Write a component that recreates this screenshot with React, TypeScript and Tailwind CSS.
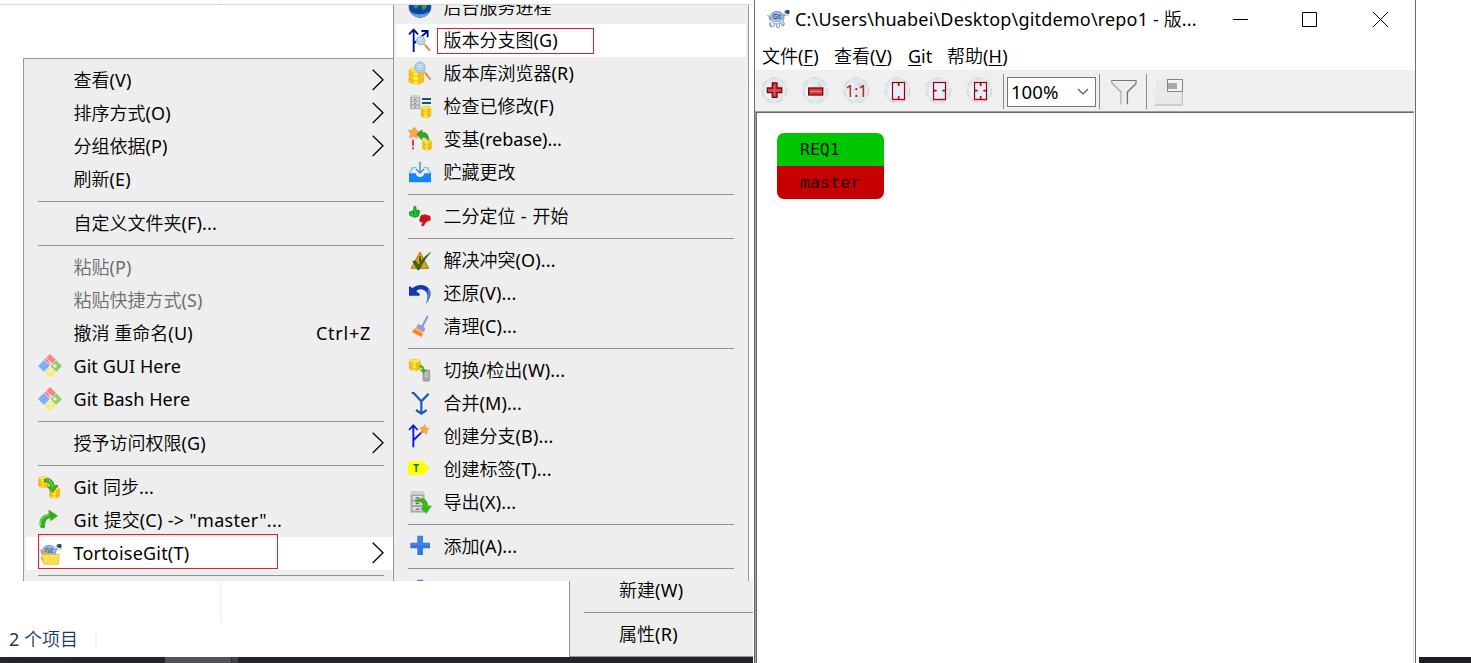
import React, { ReactNode } from "react";

const Svg = ({ children }: { children: ReactNode }) => (
  <svg viewBox="0 0 72 72" className="block h-6 w-6" fill="none">{children}</svg>
);

// Latin runs are set at regular weight, Chinese runs at the lighter one of the page.
const Mixed = ({ text }: { text: string }) => (
  <>
    {text.split(/([\x20-\x7e]+)/).map((s, i) => (i % 2 ? <span key={i} className="font-normal">{s}</span> : <span key={i} className="tracking-normal">{s}</span>))}
  </>
);

const Db = ({ x, y, w, h }: { x: number; y: number; w: number; h: number }) => {
  const r = w * 0.16;
  return (
    <g transform={`translate(${x} ${y})`}>
      <path d={`M0 ${r}V${h - r}Q${w / 2} ${h + r} ${w} ${h - r}V${r}Z`} fill="#f8c80c" stroke="#e0a008" strokeWidth="1.5" />
      <path d={`M${w * 0.3} ${r}V${h}H${w * 0.6}V${r}Z`} fill="#ffec5a" />
      <ellipse cx={w / 2} cy={r} rx={w / 2} ry={r} fill="#ffe94a" stroke="#e8b010" strokeWidth="1.5" />
      <path d={`M0 ${h * 0.38}Q${w / 2} ${h * 0.38 + 2 * r} ${w} ${h * 0.38}M0 ${h * 0.66}Q${w / 2} ${h * 0.66 + 2 * r} ${w} ${h * 0.66}`} stroke="#e0a50c" strokeWidth="2" />
    </g>
  );
};

const Lens = ({ cx, cy, r, hx, hy }: { cx: number; cy: number; r: number; hx: number; hy: number }) => (
  <g>
    <path d={`M${cx + r * 0.8} ${cy + r * 0.8}L${hx} ${hy}`} stroke="#e8853a" strokeWidth="6" strokeLinecap="round" />
    <path d={`M${cx + r * 0.7} ${cy + r * 0.7}l5 5`} stroke="#c8c8c8" strokeWidth="6" />
    <circle cx={cx} cy={cy} r={r} fill="#a9cde4" stroke="#a9bccb" strokeWidth="3" />
    <path d={`M${cx - r * 0.6} ${cy - 2}h${r * 1.2}M${cx - r * 0.5} ${cy + 5}h${r}M${cx - r * 0.4} ${cy - 8}h${r * 0.8}`} stroke="#d6eaf6" strokeWidth="3" />
  </g>
);

const Cabinet = ({ x, y, w, h }: { x: number; y: number; w: number; h: number }) => (
  <g transform={`translate(${x} ${y}) scale(${w / 32} ${h / 42})`}>
    <path d="M3 0H29L32 6V42H0V6Z" fill="#b4bac0" />
    <path d="M3 0H29L31 6H1Z" fill="#ccd4da" />
    {[8, 19, 30].map((t) => (
      <g key={t}>
        <rect x="4" y={t} width="24" height="9" fill="#e1e1de" stroke="#8f959b" strokeWidth="1.5" />
        <path d={`M12 ${t + 5}H20`} stroke="#5b6268" strokeWidth="2.5" />
      </g>
    ))}
  </g>
);

const Star = ({ x, y, s }: { x: number; y: number; s: number }) => (
  <path transform={`translate(${x} ${y}) rotate(6) scale(${s})`} d="M0-17L6-6L17-5L9 4L11 16L0 10L-11 16L-9 4L-17-5L-6-6Z" fill="#ffa63e" stroke="#e58a3a" strokeWidth="1.5" />
);

const Turtle = () => (
  <g>
    <path d="M4 25q6 0 8 10M8 32l6 8M55 28l7-10M50 24q8 4 12-4M12 46q-4 12 4 14M52 44q6 10-2 14" stroke="#7b8794" strokeWidth="2.5" />
    <path d="M14 48q-2 12 6 12q8-2 6-10M32 52q-4 10 4 10q8-2 5-10M44 46q2 12 8 9q5-4-1-12" fill="#f3f3f3" stroke="#76808b" strokeWidth="2.5" />
    <ellipse cx="33" cy="32" rx="21" ry="19" fill="#9bbaea" stroke="#5f83b8" strokeWidth="2" />
    <path d="M16 42q16 12 34 0" stroke="#dfe8f4" strokeWidth="4" />
    <text x="33" y="37" textAnchor="middle" fontSize="19" fontWeight="500" fill="#39486d" fontFamily="Noto Sans">Git</text>
    <circle cx="62" cy="18" r="8" fill="#f4f6f8" stroke="#8c98a5" strokeWidth="2" />
    <rect x="58" y="9" width="12" height="11" rx="3" fill="#153c5c" />
    <path d="M60 12h4" stroke="#3ebbe0" strokeWidth="3" />
  </g>
);

const GitIcon = () => (
  <Svg>
    <path d="M36 0L54 18L36 36L18 18Z" fill="#ff8080" />
    <path d="M18 18L36 36L18 54L0 36Z" fill="#7aafff" />
    <path d="M54 18L72 36L54 54L36 36Z" fill="#8dd35f" />
    <path d="M36 36L54 54L36 72L18 54Z" fill="#ffe680" />
    <path d="M24 11L37 25V51M37 25L51 36" stroke="#eeeeee" strokeWidth="3" />
    <path d="M18 18L36 36L54 18M18 54L36 36L54 54" stroke="#eeeeee" strokeWidth="2" />
    <circle cx="36" cy="25" r="3.5" fill="#eeeeee" />
    <circle cx="51" cy="36" r="5" fill="#eeeeee" />
    <circle cx="37" cy="51" r="5" fill="#eeeeee" />
  </Svg>
);
const SyncIcon = () => (
  <Svg>
    <Db x={2} y={5} w={29} h={33} />
    <Db x={35} y={36} w={30} h={33} />
    <path d="M19 13Q42 3 49 32L60 31L45 52L28 36L38 35Q34 17 19 21Z" fill="#37b51c" stroke="#24800f" strokeWidth="2" />
    <path d="M27 14Q41 12 43 36" stroke="#8be66b" strokeWidth="2.5" />
  </Svg>
);
const CommitIcon = () => (
  <Svg>
    <path d="M32 5L60 23L38 40L36 31Q20 32 21 58Q13 64 6 56Q-2 24 32 17Z" fill="#34ad1d" />
    <path d="M8 54Q4 26 34 21" stroke="#7edb62" strokeWidth="3.5" />
  </Svg>
);
const TortoiseFolder = () => (
  <Svg>
    <Turtle />
    <path d="M14 34H30L34 39H62L60 69H16Z" fill="#e5b52d" />
    <path d="M12 44Q12 41 16 41H64L61 70H18Z" fill="#ffdf4d" stroke="#e2b52b" strokeWidth="2" />
    <path d="M16 45H61" stroke="#fff1a0" strokeWidth="2" />
  </Svg>
);
const Globe = () => (
  <Svg>
    <circle cx="36" cy="34" r="34" fill="#1659b8" />
    <path d="M6 24Q30 44 66 24Q70 64 36 68Q2 60 6 24Z" fill="#0f459c" />
    <path d="M12 22L34 22L32 32L24 42L18 36ZM42 22L60 22L54 38L46 46L42 38Z" fill="#3f9a4a" />
    <path d="M8 50Q34 66 64 50Q54 68 36 68Q18 68 8 50Z" fill="#5f9fe2" />
  </Svg>
);
const GraphIcon = () => (
  <Svg>
    <path d="M17 72V5M3 19L17 5L30 19M18 46L56 12M40 9H59V28" stroke="#000f80" strokeWidth="5.5" />
    <Lens cx={38} cy={38} r={13} hx={64} hy={66} />
  </Svg>
);
const RepoBrowser = () => (
  <Svg><Db x={3} y={20} w={44} h={50} /><Lens cx={36} cy={19} r={16} hx={66} hy={54} /></Svg>
);
const CheckMods = () => (
  <Svg>
    <Cabinet x={6} y={4} w={31} h={42} />
    <path d="M42 15H69M42 27H69" stroke="#0c5484" strokeWidth="6" />
    <Db x={40} y={37} w={28} h={34} />
  </Svg>
);
const Rebase = () => (
  <Svg>
    <Db x={44} y={38} w={26} h={32} />
    <Star x={18} y={17} s={1.05} />
    <path d="M26 22L42 8L43 16Q64 16 62 42Q54 30 43 31L42 39Z" fill="#35a91d" stroke="#258011" strokeWidth="1.5" />
    <path d="M15 38V56M15 61V67" stroke="#f21818" strokeWidth="5" />
  </Svg>
);
const Stash = () => (
  <Svg>
    <path d="M3 42L14 23H25M47 23H58L69 42" stroke="#7cb8f8" strokeWidth="4" />
    <path d="M3 40H23Q25 51 36 51T49 40H69V67H3Z" fill="#1685fc" />
    <path d="M36 5V38M24 27L36 39L48 27" stroke="#3b92e8" strokeWidth="4.5" />
  </Svg>
);
const Bisect = () => (
  <Svg>
    <path d="M4 24L16 20L19 6L24 9L24 19L33 18L35 23L31 37L20 40L5 34Z" fill="#14cc22" stroke="#12691a" strokeWidth="2" />
    <path d="M24 24H32M23 30H31M17 21V34" stroke="#087f12" strokeWidth="2" />
    <path d="M67 48L54 53L46 66L41 64L45 53L37 54L35 48L39 35L51 32L66 37Z" fill="#f20b12" stroke="#6e1519" strokeWidth="2" />
    <path d="M39 41H50M39 47H49M54 37V50" stroke="#7d0d13" strokeWidth="2" />
  </Svg>
);
const Resolve = () => (
  <Svg>
    <path d="M36 12L62 61H9Z" fill="#e0a01c" stroke="#b97810" strokeWidth="3" strokeLinejoin="round" />
    <path d="M36 25V42" stroke="#463b13" strokeWidth="5" />
    <path d="M14 40L23 38L32 51Q44 28 68 13Q48 34 33 66H29Z" fill="#376c1c" stroke="#29510f" strokeWidth="1.5" />
  </Svg>
);
const Revert = () => (
  <Svg>
    <path d="M3 15L13 21Q32 6 53 15Q81 32 54 68Q66 36 47 27Q34 21 25 30L35 39V44H3Z" fill="#1038b4" />
    <path d="M60 21Q78 38 54 68Q64 44 58 31Z" fill="#4f7fd4" />
  </Svg>
);
const Cleanup = () => (
  <Svg>
    <path d="M58 8L43 38" stroke="#8a8df2" strokeWidth="6" strokeLinecap="round" />
    <path d="M30 31Q48 32 52 47L45 55L24 41Z" fill="#9b95ee" />
    <path d="M24 40L46 55L41 69L12 54Z" fill="#f98222" />
    <path d="M24 40L46 55L44 60L19 45Z" fill="#ffb655" />
  </Svg>
);
const Switch = () => (
  <Svg>
    <Db x={4} y={4} w={33} h={34} />
    <rect x="45" y="36" width="20" height="33" rx="3" fill="#a8abad" stroke="#85898c" strokeWidth="2" />
    <path d="M49 46H61M49 54H61" stroke="#d6d7d8" strokeWidth="3" />
    <path d="M34 21Q48 20 49 34L56 34L48 47L34 35L42 35Q42 28 34 28Z" fill="#49ad32" />
  </Svg>
);
const Merge = () => (
  <Svg><path d="M11 6H17L40 31L62 8M40 30V67M24 57L40 68L56 57" stroke="#1f57bd" strokeWidth="6.5" /></Svg>
);
const Branch = () => (
  <Svg>
    <path d="M16 70V5M3 18L16 4L29 18M17 48L43 23" stroke="#0a14f5" strokeWidth="5.5" />
    <Star x={49} y={16} s={0.85} />
  </Svg>
);
const Tag = () => (
  <Svg>
    <path d="M0 13H47L64 34L47 54H0Z" fill="#ffff00" />
    <text x="24" y="44" textAnchor="middle" fontSize="29" fontWeight="700" fill="#0a7a12" fontFamily="Noto Sans">T</text>
  </Svg>
);
const Export = () => (
  <Svg>
    <Cabinet x={7} y={4} w={43} h={64} />
    <path d="M23 31Q55 14 60 48L70 48L55 70L38 55L47 52Q45 29 23 37Z" fill="#38bd16" stroke="#2c9610" strokeWidth="1.5" />
  </Svg>
);
const Plus = () => (
  <Svg>
    <path d="M28 5H45V26H66V43H45V63H28V43H7V26H28Z" fill="#3578dc" />
    <path d="M30 7H43V28H64V34H9V28H30Z" fill="#4282e2" />
  </Svg>
);

type Item = { label?: string; icon?: ReactNode; arrow?: boolean; off?: boolean; hot?: boolean; hint?: string; track?: string };

const left: Item[] = [
  { label: "查看(V)", arrow: true },
  { label: "排序方式(O)", arrow: true },
  { label: "分组依据(P)", arrow: true },
  { label: "刷新(E)" },
  {},
  { label: "自定义文件夹(F)..." },
  {},
  { label: "粘贴(P)", off: true },
  { label: "粘贴快捷方式(S)", off: true },
  { label: "撤消 重命名(U)", hint: "Ctrl+Z" },
  { label: "Git GUI Here", icon: <GitIcon />, track: "tracking-[0.06px]" },
  { label: "Git Bash Here", icon: <GitIcon />, track: "tracking-[0.06px]" },
  {},
  { label: "授予访问权限(G)", arrow: true },
  {},
  { label: "Git 同步...", icon: <SyncIcon /> },
  { label: 'Git 提交(C) -> "master"...', icon: <CommitIcon />, track: "tracking-[0.3px]" },
  { label: "TortoiseGit(T)", icon: <TortoiseFolder />, arrow: true, hot: true, track: "tracking-[0.2px]" },
  {},
];

const right: Item[] = [
  { label: "后台服务进程", icon: <Globe /> },
  { label: "版本分支图(G)", icon: <GraphIcon />, hot: true },
  { label: "版本库浏览器(R)", icon: <RepoBrowser /> },
  { label: "检查已修改(F)", icon: <CheckMods /> },
  { label: "变基(rebase)...", icon: <Rebase />, track: "tracking-normal" },
  { label: "贮藏更改", icon: <Stash /> },
  {},
  { label: "二分定位 - 开始", icon: <Bisect />, track: "tracking-[0.6px]" },
  {},
  { label: "解决冲突(O)...", icon: <Resolve /> },
  { label: "还原(V)...", icon: <Revert /> },
  { label: "清理(C)...", icon: <Cleanup /> },
  {},
  { label: "切换/检出(W)...", icon: <Switch /> },
  { label: "合并(M)...", icon: <Merge /> },
  { label: "创建分支(B)...", icon: <Branch /> },
  { label: "创建标签(T)...", icon: <Tag /> },
  { label: "导出(X)...", icon: <Export /> },
  {},
  { label: "添加(A)...", icon: <Plus /> },
  {},
  { label: "", icon: <Plus /> },
];

const MenuRows = ({ items }: { items: Item[] }) => (
  <>
    {items.map((it, i) =>
      it.label === undefined ? (
        <div key={i} className="h-[11px] shrink-0 pt-[5px] pr-[9px] pl-3"><div className="h-px bg-[#919191]" /></div>
      ) : (
        <div key={i} className={`flex h-[33px] shrink-0 items-start pr-[9px] pl-3 ${it.hot ? "bg-white" : ""} ${it.off ? "text-[#6d6d6d]" : "text-black"}`}>
          <span className="mt-1 mr-[11.5px] h-6 w-6 shrink-0">{it.icon}</span>
          <span className={`flex-1 leading-[33px] whitespace-pre ${it.track ?? "tracking-[0.15px]"}`}><Mixed text={it.label} /></span>
          {it.hint && <span className="mr-[13px] leading-[33px] font-normal tracking-[0.75px]">{it.hint}</span>}
          {it.arrow && (
            <svg className="mt-[5px] h-[22px] w-3" viewBox="0 0 12 22" fill="none"><path d="M.7.7L11 10.8L.7 21" stroke="#000" strokeWidth="1.3" /></svg>
          )}
        </div>
      ),
    )}
  </>
);

const Ball = ({ children }: { children: ReactNode }) => (
  <svg viewBox="0 0 81 81" className="mr-[14px] h-[27px] w-[27px] shrink-0" fill="none">
    <circle cx="40" cy="40" r="39" fill="#e2e9ec" />
    <circle cx="40" cy="40" r="37" stroke="#cfdae0" strokeWidth="4" strokeDasharray="20 12" />
    <path d="M12 52Q10 28 30 16Q24 42 34 66Q20 66 12 52Z" fill="#f0f5f7" />
    <path d="M48 16Q66 24 68 42Q58 32 46 30Z" fill="#cfdbe0" />
    {children}
  </svg>
);

const Page = ({ marks }: { marks: string }) => (
  <g>
    <rect x="25.5" y="16.5" width="36" height="51" fill="#e8edfa" stroke="#980008" strokeWidth="3.6" />
    <path d={marks} stroke="#c80008" strokeWidth="5" />
    <path d="M24 67.5H63" stroke="#c00008" strokeWidth="3.6" />
  </g>
);

export default function App() {
  return (
    <div className="relative h-[663px] w-[1471px] overflow-hidden bg-white font-['Noto_Sans','Noto_Sans_CJK_SC',sans-serif] text-[18px] font-[350] text-black">
      <div className="flex h-[663px] flex-col">
        <div className="h-1 pl-[220px]"><div className="h-[3px] w-0.5 bg-[#f3f3f3]" /></div>
        <div className="h-px w-[753px] bg-[#dadada]" />
        <div className="h-[576px]" />
        <div className="h-[41px] pl-[220px]"><div className="h-full w-0.5 bg-[#f5f5f5]" /></div>
        <div className="flex h-[35px] items-start pl-[9px] text-[#1e395b]">
          <span className="w-[86px] leading-[35px]"><Mixed text="2 个项目" /></span>
          <span className="mt-[9px] h-[17px] w-0.5 bg-[#f3f3f3]" />
        </div>
        <div className="flex h-1.5">
          <div className="w-[165px] bg-[#25252a]" />
          <div className="w-[66px] bg-[#535357]" />
          <div className="w-px bg-[#303034]" />
          <div className="w-1.5 bg-[#414145]" />
          <div className="w-[515px] bg-[#232529]" />
          <div className="w-[666px]" />
          <div className="w-[52px] bg-[#1d1d22]" />
        </div>
      </div>

      <div className="absolute top-[58px] left-[23px] flex h-[523px] w-[370px] flex-col overflow-hidden border-t border-l border-[#979797] bg-[#eee] pt-[5px] pl-0.5">
        <MenuRows items={left} />
      </div>
      <div className="absolute top-[534px] left-[38px] h-[35px] w-[240px] border border-[#e51f2a]" />

      <div className="absolute top-[5px] left-[393px] flex h-[576px] w-[356px] flex-col overflow-hidden border-r border-l border-[#979797] bg-[#eee] pr-0.5 pl-0.5">
        <div className="-mt-[14px] flex flex-col pr-[3px] [&>div]:-mr-[3px] [&>div]:pr-[12px]"><MenuRows items={right} /></div>
      </div>
      <div className="absolute top-[28px] left-[437px] h-[26px] w-[157px] border border-[#e51f2a]" />

      <div className="absolute top-[581px] left-[569px] flex h-[76px] w-[184px] flex-col border-b border-l border-[#979797] bg-[#eee]">
        <div className="h-[26px] shrink-0 pl-[49px] leading-[19px] tracking-[0.3px]"><Mixed text="新建(W)" /></div>
        <div className="h-[11px] pt-[5px] pl-[14px]"><div className="h-px bg-[#919191]" /></div>
        <div className="h-[33px] pl-[49px] leading-[33px] tracking-[0.3px]"><Mixed text="属性(R)" /></div>
      </div>

      <div className="absolute top-0 left-[754px] flex h-[663px] w-[662px] flex-col border-r border-l border-[#6b6b6b] bg-white">
        <div className="flex h-10 items-start pl-[11px]">
          <span className="mt-[7px] mr-[5px] h-6 w-6"><Svg><Turtle /></Svg></span>
          <span className="w-[438px] leading-[39px] tracking-[0.18px] whitespace-nowrap"><Mixed text="C:\Users\huabei\Desktop\gitdemo\repo1 - 版..." /></span>
          <svg className="mt-3 h-4 w-[160px]" viewBox="0 0 160 16" fill="none" stroke="#000">
            <path d="M0 7.5H15M69.5.5H83.5V14.5H69.5Z" />
            <path d="M140 0L155 15M155 0L140 15" />
          </svg>
        </div>
        <div className="flex h-[30px] pl-[7px] leading-[33px]">
          <span className="w-[72px]">文件<span className="font-normal tracking-[0.2px]">(<u className="underline-offset-2">F</u>)</span></span>
          <span className="w-[74px]">查看<span className="font-normal tracking-[0.2px]">(<u className="underline-offset-2">V</u>)</span></span>
          <span className="w-[39px] font-normal"><u className="underline-offset-2">G</u>it</span>
          <span>帮助<span className="font-normal tracking-[0.2px]">(<u className="underline-offset-2">H</u>)</span></span>
        </div>
        <div className="flex h-[41px] items-start bg-[#efefef] pt-1 pl-[6px]">
          <div className="mt-[3px] flex w-[242px]">
            <Ball><path d="M34 18H48V33H62V47H48V61H34V47H19V33H34Z" fill="#c83f45" stroke="#8a0008" strokeWidth="4" /><path d="M41 23V56M24 40H57" stroke="#dc5a60" strokeWidth="3" /></Ball>
            <Ball><rect x="20" y="33" width="42" height="21" fill="#c83f45" stroke="#96000a" strokeWidth="4" /><path d="M24 43H58" stroke="#ec9095" strokeWidth="3" /></Ball>
            <Ball><text x="40" y="59" textAnchor="middle" fontSize="46" fontWeight="400" fill="#a81018" fontFamily="Noto Sans">1:1</text></Ball>
            <Ball><Page marks="M44 17V27M44 57V67" /></Ball>
            <Ball><Page marks="M26 41H35M52 41H61" /></Ball>
            <Ball><Page marks="M44 17V27M44 57V67M26 41H35M52 41H61" /></Ball>
          </div>
          <div className="flex h-[35px] w-[93px] items-start">
            <i className="h-[35px] w-px bg-[#8b8b8b]" />
            <div className="mt-[3px] ml-[3px] flex h-[30px] w-[90px] items-center justify-between border border-[#747474] bg-white pr-1.5 pl-[3px]">
              <span className="text-[18.6px] leading-7 font-normal">100%</span>
              <svg className="h-2 w-3" viewBox="0 0 12 8" fill="none"><path d="M1 1L6 6L11 1" stroke="#555" strokeWidth="1.2" /></svg>
            </div>
          </div>
          <i className="ml-[3px] h-[35px] w-px bg-[#8b8b8b]" />
          <svg className="mt-[5px] ml-[11px] h-[26px] w-[26px]" viewBox="0 0 78 78" fill="none">
            <path d="M2 3H76V14L50 39V76H30V39L2 11Z" fill="#ededed" />
            <path d="M30 76V39L2 11V3" stroke="#9ca2a8" strokeWidth="3.5" />
            <path d="M35 42V75" stroke="#e2f1fa" strokeWidth="5" />
            <path d="M74 14L48 40V76" stroke="#cfcfcf" strokeWidth="5" />
            <path d="M2 4.5H75V14L49.5 39V76" stroke="#777" strokeWidth="3.5" />
          </svg>
          <i className="ml-[9px] h-[35px] w-px bg-[#8b8b8b]" />
          <svg className="mt-[5px] ml-2 h-7 w-7" viewBox="0 0 84 84" fill="none">
            <rect width="84" height="80" fill="#e9e9e9" />
            <path d="M0 40V2H36" stroke="#e2eff8" strokeWidth="4" />
            <path d="M0 78H82" stroke="#cdcdcd" strokeWidth="6" />
            <path d="M82 38V78" stroke="#bdbdbd" strokeWidth="3" />
            <rect x="37.5" y="1.5" width="45" height="36" fill="#f2f2f2" stroke="#858585" strokeWidth="3" />
            <rect x="39" y="12" width="27" height="18" fill="#a9a9a9" />
          </svg>
        </div>
        <div className="mr-px flex-1 border-t border-l border-[#a0a0a0]">
          <div className="h-full border-t border-r border-l border-t-[#696969] border-r-[#dedede] border-l-[#696969] pt-5 pl-5 font-['DejaVu_Sans_Mono',monospace] text-[16.5px]">
            <div className="w-[107px] overflow-hidden rounded-[7px]">
              <div className="h-[33px] bg-[#00c600] pl-[23px] leading-[33px] text-[#001400]">REQ1</div>
              <div className="h-[33px] bg-[#c60000] pl-[23px] leading-[33px] tracking-[0.1px] text-[#180000]">master</div>
            </div>
          </div>
        </div>
      </div>
    </div>
  );
}
